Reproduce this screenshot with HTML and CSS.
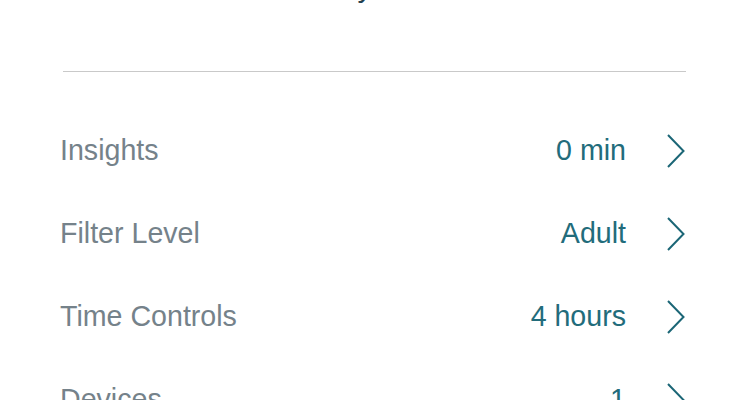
FILE: index.html
```html
<!DOCTYPE html>
<html>
<head>
<meta charset="utf-8">
<link rel="stylesheet" href="styles.css">
</head>
<body>
<div class="page">
  <div class="title">Activity</div>
  <div class="divider"></div>
  <div class="list">
    <div class="row">
      <span class="label">Insights</span>
      <span class="value">0 min</span>
      <svg class="chev" viewBox="0 0 18 34" width="18" height="34"><path d="M1 1 L16.5 17 L1 33" fill="none" stroke="#1b6676" stroke-width="2"/></svg>
    </div>
    <div class="row">
      <span class="label">Filter Level</span>
      <span class="value">Adult</span>
      <svg class="chev" viewBox="0 0 18 34" width="18" height="34"><path d="M1 1 L16.5 17 L1 33" fill="none" stroke="#1b6676" stroke-width="2"/></svg>
    </div>
    <div class="row">
      <span class="label">Time Controls</span>
      <span class="value">4 hours</span>
      <svg class="chev" viewBox="0 0 18 34" width="18" height="34"><path d="M1 1 L16.5 17 L1 33" fill="none" stroke="#1b6676" stroke-width="2"/></svg>
    </div>
    <div class="row">
      <span class="label">Devices</span>
      <span class="value">1</span>
      <svg class="chev" viewBox="0 0 18 34" width="18" height="34"><path d="M1 1 L16.5 17 L1 33" fill="none" stroke="#1b6676" stroke-width="2"/></svg>
    </div>
  </div>
</div>
</body>
</html>
```

FILE: styles.css
```css
html, body {
  margin: 0;
  padding: 0;
  background: #ffffff;
  overflow: hidden;
}
.page {
  width: 750px;
  height: 400px;
  overflow: hidden;
  font-family: "Liberation Sans", Arial, sans-serif;
}
.title {
  font-size: 30px;
  line-height: 30px;
  height: 30px;
  margin-top: -28px;
  padding-right: 100px;
  text-align: center;
  color: #23404f;
}
.divider {
  height: 1px;
  background: #c9c9c9;
  margin: 69px 64px 0 63px;
}
.list {
  display: flex;
  flex-direction: column;
  padding-top: 37px;
}
.row {
  height: 83px;
  display: flex;
  align-items: center;
  padding: 0 65px 0 60px;
  font-size: 28.6px;
}
.label {
  flex: 1;
  color: #75828a;
}
.value {
  color: #226c7b;
  margin-right: 41px;
}
.chev {
  display: block;
  flex: none;
}
```
